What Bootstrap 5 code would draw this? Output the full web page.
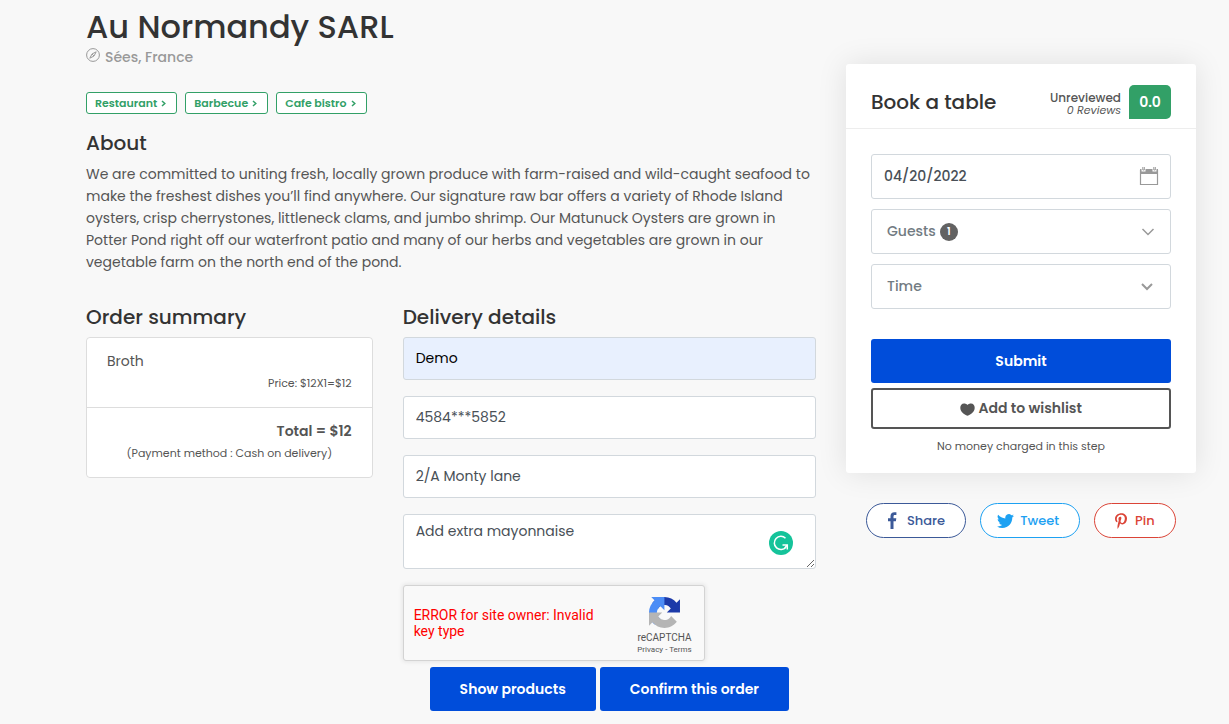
<!DOCTYPE html>
<html lang="en">
<head>
<meta charset="utf-8">
<meta name="viewport" content="width=device-width, initial-scale=1">
<title>Au Normandy SARL</title>
<link href="https://cdn.jsdelivr.net/npm/bootstrap@5.3.0/dist/css/bootstrap.min.css" rel="stylesheet">
<style>
body { font-family: Poppins, Inter, "Open Sans", sans-serif; font-size: 14px; line-height: 22px; color: #555; background: #f8f8f8; }
h1, h2, h3 { color: #333; font-weight: 500; margin: 0; }
h1 { font-size: 32px; line-height: 38px; }
h2, h3 { font-size: 20px; line-height: 24px; }
a { text-decoration: none; }
.page { padding: 8px 33px 12px 86px; }
.page .row { --bs-gutter-x: 30px; }
.place { color: #999; font-weight: 500; gap: 5px; line-height: 22px; }
.tags { gap: 8px; margin-top: 24px; }
.tag-link { border: 1px solid #32a067; border-radius: 3px; color: #32a067; background: #fff; font-size: 11px; font-weight: 600; line-height: 20px; padding: 0 10px 0 8px; gap: 4px; }
.about { margin: 17px 0 32px; }
.about p { margin: 8px 0 0; }
.summary { border: 1px solid #ddd; border-radius: 4px; }
.summary .list-group-item { padding: 12px 20px; color: #555; border-color: #ddd; }
.fine { font-size: 11px; line-height: 23px; }
.field { border: 1px solid #d2d8dd; border-radius: 3px; font-size: 14px; line-height: 23px; padding: 9px 12px; color: #495057; background-color: #fff; }
.field-filled { background: #e8f0fe; color: #000; }
.field-note { height: 55px; padding-top: 5px; }
.checker { top: 17px; right: 23px; }
.captcha { width: 302px; height: 76px; background: #f9f9f9; border: 1px solid #d3d3d3; border-radius: 3px; box-shadow: 0 0 4px 1px rgba(0,0,0,.08); font-family: Roboto, sans-serif; padding: 11px 12px 4px 10px; }
.captcha-error { color: #f00; font-weight: 400; line-height: 16px; width: 190px; margin-top: 10px; }
.captcha-brand { font-size: 10px; line-height: 12px; color: #555; }
.captcha-brand a { color: #555; }
.captcha-terms { font-size: 8px; }
.btn-main { background: #004dda; color: #fff; border: 0; border-radius: 3px; font-size: 14px; font-weight: 600; line-height: 22px; padding: 11px 30px; }
.btn-main:hover { background: #003fb5; color: #fff; }
.order-actions { margin-top: 6px; }
.aside { padding-top: 56px; }
.booking { background: #fff; border-radius: 3px; box-shadow: 0 0 30px rgba(0,0,0,.1); }
.booking-head { padding: 21px 25px 9px; border-bottom: 1px solid #ededed; }
.booking-body { padding: 25px 25px 15px; }
.booking-fields { gap: 10px; margin-bottom: 30px; }
.verdict { font-size: 12px; font-weight: 500; line-height: 13px; gap: 8px; }
.verdict-text { padding-top: 3px; }
.verdict em { font-size: 11px; font-weight: 400; display: block; }
.score { background: #32a067; color: #fff; font-size: 14px; font-weight: 600; line-height: 34px; width: 42px; border-radius: 5px 5px 5px 0; }
.pick { padding: 10px 15px; color: #727b82; font-weight: 500; }
.pick-date { color: #495057; padding-left: 12px; }
.pick-icon { top: 12px; right: 12px; pointer-events: none; }
.count { width: 18px; height: 18px; border-radius: 50%; background: #626262; color: #fff; font-size: 10px; font-weight: 600; line-height: 18px; }
.btn-wish { border: 2px solid #555; color: #555; border-radius: 3px; font-size: 14px; font-weight: 600; line-height: 21px; padding: 8px; margin-top: 5px; background: #fff; }
.step-note { margin-top: 6px; }
.share { margin: 30px 0 0 20px; gap: 14px; }
.share a { border: 1px solid; border-radius: 18px; background: #fff; font-size: 13px; font-weight: 500; line-height: 33px; gap: 8px; padding: 0 20px; }
.share .fb { color: #3b5998; } .share .tw { color: #1da1f2; padding: 0 20px 0 16px; gap: 6px; } .share .pin { color: #db4437; }
</style>
</head>
<body>
<div class="container-fluid page">
<div class="row">
  <main class="col-8">
    <h1>Au Normandy SARL</h1>
    <div class="place d-flex align-items-center">
      <svg class="mb-1" width="14" height="14" viewBox="0 0 14 14" fill="none" stroke="#999"><circle cx="7" cy="7" r="6.4"/><path d="M10.2 3.8 8 8 3.8 10.2 6 6z"/><path d="m6 6 2 2"/></svg>
      <span>Sées, France</span>
    </div>
    <nav class="tags d-flex" aria-label="Categories">
      <a class="tag-link d-flex align-items-center" href="#">Restaurant<svg width="5" height="7" viewBox="0 0 5 7" fill="none" stroke="currentColor" stroke-width="1.500"><path d="m1 1 2.800 2.500L1 6"/></svg></a>
      <a class="tag-link d-flex align-items-center" href="#">Barbecue<svg width="5" height="7" viewBox="0 0 5 7" fill="none" stroke="currentColor" stroke-width="1.500"><path d="m1 1 2.800 2.500L1 6"/></svg></a>
      <a class="tag-link d-flex align-items-center" href="#">Cafe bistro<svg width="5" height="7" viewBox="0 0 5 7" fill="none" stroke="currentColor" stroke-width="1.500"><path d="m1 1 2.800 2.500L1 6"/></svg></a>
    </nav>
    <section class="about">
      <h2>About</h2>
      <p>We are committed to uniting fresh, locally grown produce with farm-raised and wild-caught seafood to make the freshest dishes you’ll find anywhere. Our signature raw bar offers a variety of Rhode Island oysters, crisp cherrystones, littleneck clams, and jumbo shrimp. Our Matunuck Oysters are grown in Potter Pond right off our waterfront patio and many of our herbs and vegetables are grown in our vegetable farm on the north end of the pond.</p>
    </section>
    <div class="row">
      <section class="col-5">
        <h3 class="mb-2">Order summary</h3>
        <ul class="list-group list-group-flush summary">
          <li class="list-group-item">Broth<div class="fine text-end">Price: $12X1=$12</div></li>
          <li class="list-group-item"><div class="fw-semibold text-end">Total = $12</div><div class="fine text-center">(Payment method : Cash on delivery)</div></li>
        </ul>
      </section>
      <section class="col-7">
        <h3 class="mb-2">Delivery details</h3>
        <form>
          <input class="form-control field field-filled mb-3" type="text" aria-label="Name" value="Demo">
          <input class="form-control field mb-3" type="text" aria-label="Phone" value="4584***5852">
          <input class="form-control field mb-3" type="text" aria-label="Address" value="2/A Monty lane">
          <div class="position-relative mb-3">
            <textarea class="form-control field field-note d-block" aria-label="Order note">Add extra mayonnaise</textarea>
            <svg class="checker position-absolute" width="24" height="24" viewBox="0 0 24 24" fill="none" stroke="#fff" stroke-width="1.500"><circle cx="12" cy="12" r="12" fill="#15c39a" stroke="none"/><path d="M16.500 7.200A6.600 6.600 0 1 0 17 16.200"/><path d="M13.500 14h4.800v4.500"/><path d="M18 14.300 15.800 17"/></svg>
          </div>
          <div class="captcha d-flex justify-content-between">
            <div class="captcha-error">ERROR for site owner: Invalid key type</div>
            <div class="captcha-brand text-center">
              <svg class="d-block mx-auto" width="31" height="31" viewBox="0 0 64 64"><path d="M64 31.955l-.033-1.370V4.687l-7.160 7.160C50.948 4.674 42.033.093 32.050.093c-10.400 0-19.622 4.960-25.458 12.640l11.736 11.860a15.550 15.550 0 0 1 4.754-5.334c2.050-1.600 4.952-2.906 8.968-2.906.485 0 .860.057 1.135.163 4.976.393 9.288 3.140 11.828 7.124l-8.307 8.307L64 31.953" fill="#1c3aa9"/><path d="M31.862.094l-1.370.033H4.594l7.160 7.160C4.580 13.147 0 22.060 0 32.046c0 10.400 4.960 19.622 12.640 25.458L24.500 45.768a15.550 15.550 0 0 1-5.334-4.754c-1.600-2.050-2.906-4.952-2.906-8.968 0-.485.057-.860.163-1.135.393-4.976 3.140-9.288 7.124-11.828l8.307 8.307L31.860.095" fill="#4c8df6"/><path d="M.001 32.045l.033 1.370v25.898l7.160-7.160c5.860 7.173 14.774 11.754 24.760 11.754 10.400 0 19.622-4.960 25.458-12.640l-11.736-11.860a15.550 15.550 0 0 1-4.754 5.334c-2.050 1.600-4.952 2.906-8.968 2.906-.485 0-.860-.057-1.135-.163-4.976-.393-9.288-3.140-11.828-7.124l8.307-8.307c-10.522.040-22.400.066-27.295-.005" fill="#b5b5b5"/></svg>
              <div class="mt-1">reCAPTCHA</div>
              <div class="captcha-terms"><a href="#">Privacy</a> - <a href="#">Terms</a></div>
            </div>
          </div>
          <div class="order-actions d-flex justify-content-center gap-1">
            <button type="button" class="btn btn-main">Show products</button>
            <button type="submit" class="btn btn-main">Confirm this order</button>
          </div>
        </form>
      </section>
    </div>
  </main>
  <aside class="col-4 aside">
    <form class="booking">
      <div class="booking-head d-flex justify-content-between align-items-center">
        <h3>Book a table</h3>
        <div class="verdict d-flex align-items-center text-end">
          <div class="verdict-text">Unreviewed<em>0 Reviews</em></div>
          <strong class="score text-center">0.0</strong>
        </div>
      </div>
      <div class="booking-body">
        <div class="booking-fields d-flex flex-column">
          <div class="position-relative">
            <input class="form-control field pick pick-date" type="text" aria-label="Date" value="04/20/2022">
            <svg class="pick-icon position-absolute" width="20" height="20" viewBox="0 0 20 20"><path d="M1.500 4v14.500h17V4" fill="none" stroke="#999" stroke-width="1.200"/><path d="M1 3h1.500v2.500h4V3h7v2.500h4V3H19v5H1z" fill="#999"/><path d="M3.800 1v3h1.500V1M14.800 1v3h1.500V1" fill="none" stroke="#999"/></svg>
          </div>
          <button type="button" class="form-control field pick text-start d-flex align-items-center justify-content-between">
            <span class="d-flex align-items-center gap-1">Guests <span class="count text-center">1</span></span>
            <svg width="14" height="10" viewBox="0 0 14 10" fill="none" stroke="#999" stroke-width="1.500"><path d="m1.500 2 5.500 5.500L12.500 2"/></svg>
          </button>
          <div class="position-relative">
            <select class="form-control field pick" aria-label="Time"><option>Time</option></select>
            <svg class="pick-icon position-absolute" width="24" height="20" viewBox="0 0 24 20" fill="none" stroke="#999" stroke-width="2"><path d="m7 8 5 5 5-5"/></svg>
          </div>
        </div>
        <button type="submit" class="btn btn-main w-100">Submit</button>
        <button type="button" class="btn btn-wish w-100"><svg width="15" height="13" viewBox="0 0 15 13" fill="#555"><path d="M7.500 12.800C4 11.500.300 8.500.300 4.700.300 2.300 1.800.500 4 .500c1.400 0 2.700.500 3.500 1.500C8.300 1 9.600.500 11 .500c2.200 0 3.700 1.800 3.700 4.200 0 3.800-3.700 6.800-7.200 8.100z"/></svg> Add to wishlist</button>
        <div class="fine step-note text-center">No money charged in this step</div>
      </div>
    </form>
    <div class="share d-flex">
      <a class="fb d-flex align-items-center" href="#"><svg width="12" height="17" viewBox="0 0 12 17" fill="currentColor"><path d="M3.500 17V9.200H1V6.300h2.500V4.100C3.500 1.500 5 .200 7.400.200c1 0 1.700.100 2 .100v2.600H7.900c-1.200 0-1.400.600-1.400 1.500v1.900h2.800l-.400 2.900H6.500V17z"/></svg>Share</a>
      <a class="tw d-flex align-items-center" href="#"><svg width="17" height="17" viewBox="0 0 16 16" fill="currentColor"><path d="M5.026 15c6.038 0 9.341-5.003 9.341-9.334 0-.140 0-.282-.006-.422A6.685 6.685 0 0 0 16 3.542a6.658 6.658 0 0 1-1.889.518 3.301 3.301 0 0 0 1.447-1.817 6.533 6.533 0 0 1-2.087.793A3.286 3.286 0 0 0 7.875 6.030a9.325 9.325 0 0 1-6.767-3.429 3.289 3.289 0 0 0 1.018 4.382A3.323 3.323 0 0 1 .640 6.575v.045a3.288 3.288 0 0 0 2.632 3.218 3.203 3.203 0 0 1-.865.115 3.230 3.230 0 0 1-.614-.057 3.283 3.283 0 0 0 3.067 2.277A6.588 6.588 0 0 1 .780 13.580a6.320 6.320 0 0 1-.780-.045A9.344 9.344 0 0 0 5.026 15z"/></svg>Tweet</a>
      <a class="pin d-flex align-items-center" href="#"><svg width="12" height="16" viewBox="0 0 384 512" fill="currentColor"><path d="M204 6.500C101.400 6.500 0 74.900 0 185.600 0 256 39.600 296 63.600 296c9.900 0 15.600-27.600 15.600-35.400 0-9.300-23.700-29.100-23.700-67.800 0-80.400 61.200-137.400 140.400-137.400 68.100 0 118.500 38.700 118.500 109.800 0 53.100-21.300 152.700-90.300 152.700-24.900 0-46.200-18-46.200-43.800 0-37.800 26.400-74.400 26.400-113.400 0-66.200-93.900-54.200-93.900 25.800 0 16.800 2.100 35.400 9.600 50.700-13.800 59.400-42 147.900-42 209.100 0 18.900 2.700 37.500 4.500 56.400 3.400 3.800 1.700 3.400 6.900 1.500 50.400-69 48.600-82.500 71.400-172.800 12.300 23.400 44.100 36 69.300 36 106.200 0 153.900-103.500 153.900-196.800C384 71.300 298.200 6.500 204 6.500z"/></svg>Pin</a>
    </div>
  </aside>
</div>
</div>
<script src="https://cdn.jsdelivr.net/npm/bootstrap@5.3.0/dist/js/bootstrap.bundle.min.js"></script>
</body>
</html>
